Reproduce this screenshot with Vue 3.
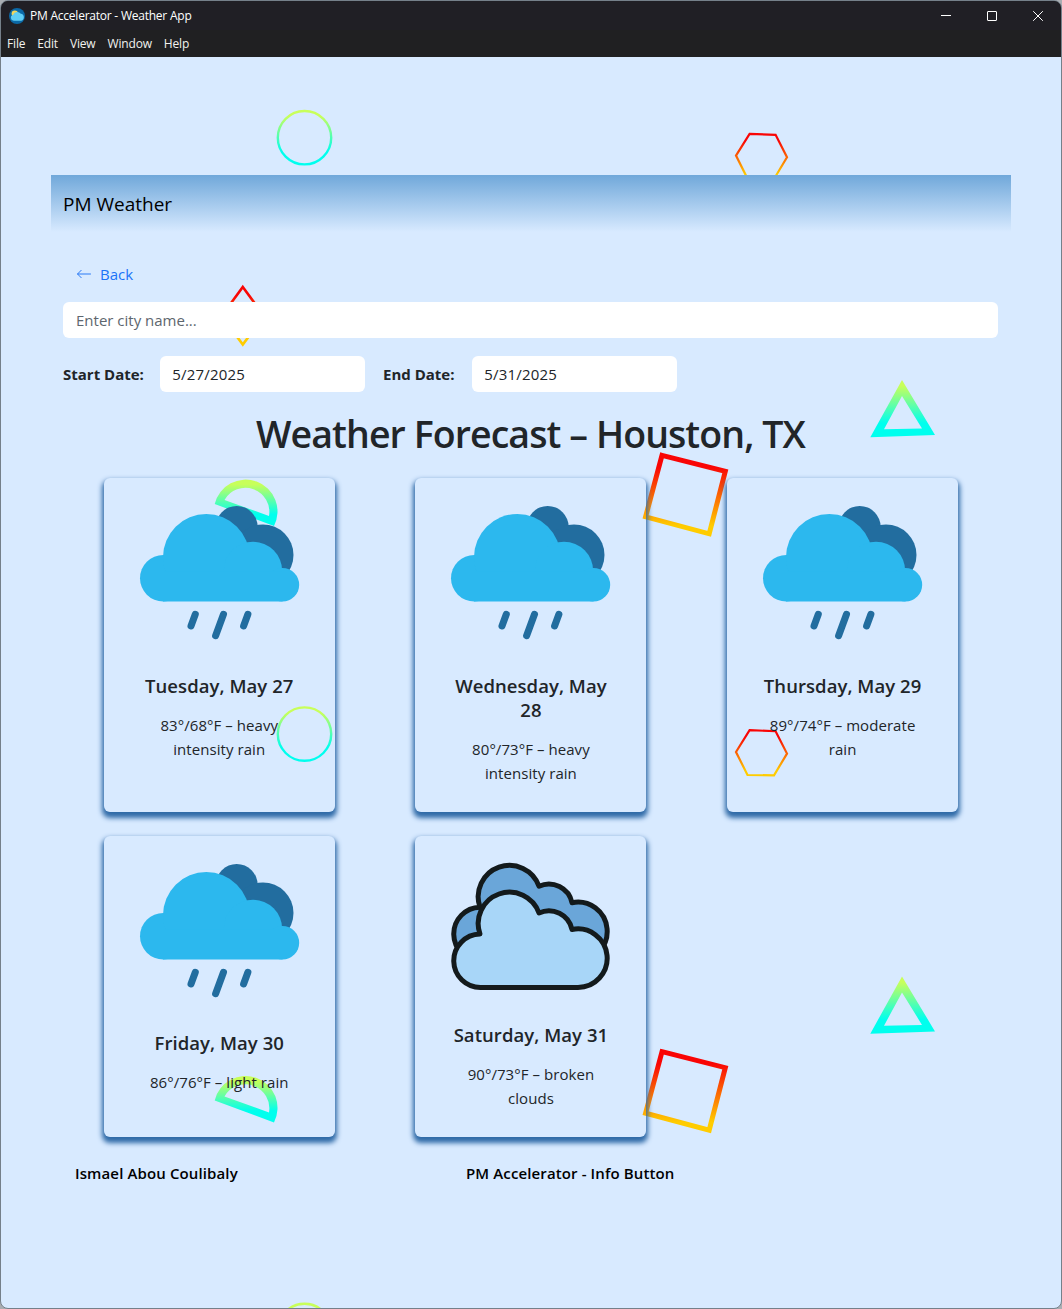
<script setup>
const menu = ['File', 'Edit', 'View', 'Window', 'Help']
const tiles = [0, 1, 2]
const days = [
  { title: 'Tuesday, May 27', text: '83°/68°F – heavy intensity rain', icon: 'rain' },
  { title: 'Wednesday, May 28', text: '80°/73°F – heavy intensity rain', icon: 'rain' },
  { title: 'Thursday, May 29', text: '89°/74°F – moderate rain', icon: 'rain' },
  { title: 'Friday, May 30', text: '86°/76°F – light rain', icon: 'rain' },
  { title: 'Saturday, May 31', text: '90°/73°F – broken clouds', icon: 'clouds' },
]
const cloudPath =
  'M481 987.5A26 26 0 0 1 480 934A31 31 0 0 1 539 913A23.7 23.7 0 0 1 572 929.5A29.3 29.3 0 1 1 577.5 987.5Z'
</script>

<template>
  <div class="window">
    <header class="chrome">
      <div class="titlebar">
        <svg class="logo" viewBox="0 0 16 16" width="16" height="16">
          <circle cx="8" cy="8" r="8" fill="#0b68a6" />
          <circle cx="5.8" cy="5.6" r="3.2" fill="#f3d55b" />
          <path d="M4.8 12.8a3.1 3.1 0 0 1-.6-6.1A4.4 4.4 0 0 1 11.8 5.8a3.6 3.6 0 0 1 .5 7z" fill="#5fcdf5" />
        </svg>
        <span class="app-name">PM Accelerator - Weather App</span>
        <div class="controls">
          <svg viewBox="0 0 12 12" width="12" height="12"><path d="M1 5.5h10" /></svg>
          <svg viewBox="0 0 12 12" width="12" height="12"><rect x="1.5" y="1.5" width="9" height="9" rx=".4" /></svg>
          <svg viewBox="0 0 12 12" width="12" height="12"><path d="M1.2 1.2l9.6 9.6M10.8 1.2l-9.6 9.6" /></svg>
        </div>
      </div>
      <nav class="menu">
        <span v-for="m in menu" :key="m">{{ m }}</span>
      </nav>
    </header>

    <svg class="pattern" viewBox="0 0 1062 1309" width="1062" height="1309">
      <defs>
        <linearGradient id="cool" x1="0" y1="0" x2="0" y2="1">
          <stop offset=".1" stop-color="#c8ff5a" />
          <stop offset=".75" stop-color="#00ffee" />
        </linearGradient>
        <linearGradient id="warm" x1="0" y1="0" x2="0" y2="1">
          <stop offset=".15" stop-color="#f90505" />
          <stop offset=".9" stop-color="#ffcc00" />
        </linearGradient>
      </defs>
      <g v-for="n in tiles" :key="n" :transform="`translate(0 ${n * 596.4})`">
        <circle cx="304.5" cy="137.7" r="26.7" fill="none" stroke="url(#cool)" stroke-width="2.4" />
        <path d="M749.6 133.8L775.6 134.8L787 157.2L774 179L747.5 178.6L736 155.6Z" fill="none" stroke="url(#warm)" stroke-width="2.2" />
        <path d="M242.8 287L264 316L242.8 344.6L221.6 316Z" fill="none" stroke="url(#warm)" stroke-width="2.6" />
        <path d="M662 455.3L725.3 471.3L709.2 533.8L645.6 516.8Z" fill="none" stroke="url(#warm)" stroke-width="5" />
        <path d="M902 380L935 435L870.3 437.3ZM902 396L884 429.3L922 428.5Z" fill="url(#cool)" fill-rule="evenodd" />
        <path d="M214.7 504A31.85 31.85 0 1 1 274 526ZM224.5 500L269 516A24 24 0 0 0 224.5 500Z" fill="url(#cool)" fill-rule="evenodd" />
      </g>
    </svg>

    <main class="page">
      <div class="navbar">PM Weather</div>
      <div class="content">
        <a class="back">
          <svg viewBox="0 0 16 16" width="16" height="16">
            <path d="M14.5 8H1.7M5.2 4.3L1.5 8l3.7 3.7" fill="none" stroke="#2b7af5" stroke-linecap="round" stroke-linejoin="round" />
          </svg>
          <span>Back</span>
        </a>
        <div class="field city">Enter city name...</div>
        <div class="dates">
          <b class="start">Start Date:</b>
          <div class="field date">5/27/2025</div>
          <b class="end">End Date:</b>
          <div class="field date">5/31/2025</div>
        </div>
        <h1>Weather Forecast – Houston, TX</h1>
        <div class="grid">
          <article v-for="d in days" :key="d.title" class="card">
            <svg v-if="d.icon === 'rain'" viewBox="104 478 231 195.4" width="231" height="195.4">
              <g fill="#226d9f">
                <circle cx="236.7" cy="527" r="21" />
                <circle cx="263" cy="555" r="30.5" />
              </g>
              <g fill="#2cb8ee">
                <circle cx="163.3" cy="578.2" r="23.3" />
                <circle cx="206.3" cy="557.3" r="43.3" />
                <circle cx="253" cy="571" r="29.2" />
                <circle cx="282.5" cy="584.8" r="16.7" />
                <rect x="163" y="572" width="119.5" height="29.5" />
              </g>
              <path d="M195.3 614.3L191 626M223.5 614.3L215.6 635.7M247.9 614.3L243.6 626" fill="none" stroke="#226d9f" stroke-width="7" stroke-linecap="round" />
            </svg>
            <svg v-else viewBox="415 836 231 187.3" width="231" height="187.3">
              <g stroke="#131a1c" stroke-width="5" stroke-linejoin="round">
                <path :d="cloudPath" fill="#6aa6d9" transform="translate(0 -26.8)" />
                <path :d="cloudPath" fill="#a8d6f8" />
              </g>
            </svg>
            <h5>{{ d.title }}</h5>
            <p>{{ d.text }}</p>
          </article>
        </div>
        <footer>
          <span>Ismael Abou Coulibaly</span>
          <span>PM Accelerator - Info Button</span>
        </footer>
      </div>
    </main>
  </div>
</template>

<style>
body { background: #a9adb2; }
</style>

<style scoped>
* { box-sizing: border-box; }
.window {
  position: relative;
  width: 1062px;
  height: 1309px;
  overflow: hidden;
  border: 1px solid #75808a;
  border-radius: 8px;
  background: #d8eaff;
  color: #212529;
  font-family: "Open Sans", "Noto Sans", sans-serif;
  font-size: 15px;
  line-height: 24px;
}
.chrome { height: 56px; background: #202022; color: #fff; font-size: 12px; line-height: 16px; }
.titlebar { display: flex; align-items: center; height: 29px; padding-left: 8px; background: #201f25; }
.app-name { margin-left: 5px; letter-spacing: -0.23px; }
.controls { display: flex; gap: 34px; margin-left: auto; margin-right: 17px; }
.controls svg { fill: none; stroke: #fff; stroke-width: 1; }
.menu { display: flex; gap: 12px; padding: 6px 0 0 6px; letter-spacing: -0.17px; color: #f2f2ee; }
.pattern { position: absolute; left: -1px; top: -1px; pointer-events: none; }
.page { position: relative; margin: 118px 50px 0; }
.navbar {
  height: 57px;
  padding: 15px 12px 13px;
  background: linear-gradient(#70a8da, #d8eaff);
  color: #000;
  font-size: 19px;
  line-height: 29px;
}
.content { padding: 30px 12px 0; }
.back { display: flex; align-items: center; gap: 8px; height: 24px; padding-left: 13px; color: #1b73f8; }
.field { height: 36px; padding: 6px 13px; border-radius: 6px; background: #fff; }
.city { width: 935px; margin-top: 16px; color: #5d666e; }
.dates { display: flex; align-items: center; margin-top: 18px; }
.date { width: 205px; padding-left: 12.3px; letter-spacing: .2px; }
.start { width: 97px; }
.end { width: 89px; margin-left: 18px; }
b { font-weight: 700; white-space: nowrap; }
h1 {
  width: 935px;
  margin: 18px 0 0;
  text-align: center;
  font-size: 37.5px;
  line-height: 48px;
  font-weight: 600;
  letter-spacing: -.92px;
  white-space: nowrap;
}
.grid { display: grid; grid-template-columns: repeat(3, 311.7px); row-gap: 24px; margin: 20.2px 0 0 .4px; }
.card {
  width: 231px;
  justify-self: center;
  padding-bottom: 27px;
  border-radius: 6px;
  box-shadow: 0 4px 5px 2px #306ba8;
  text-align: center;
}
.card svg { display: block; }
h5 { margin: 0 32px; font-size: 18.5px; line-height: 24px; font-weight: 600; letter-spacing: .06px; }
p { margin: 15px 40px 0; letter-spacing: .06px; }
footer { display: flex; padding: 24px 12px 0; color: #000; font-size: 15px; font-weight: 600; letter-spacing: .12px; }
footer span { width: 391px; }
</style>
